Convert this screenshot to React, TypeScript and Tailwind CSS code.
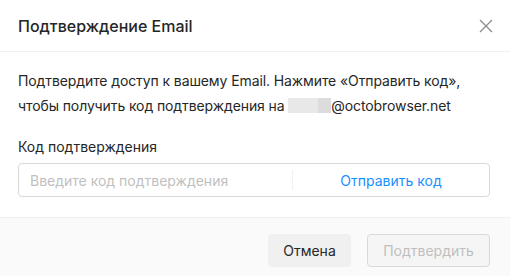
export default function App() {
  return (
    <div className="w-[510px] h-[276px] bg-white flex flex-col text-[#262626]" style={{ fontFamily: "Inter, 'Noto Sans', sans-serif" }}>
      <div className="h-[52px] shrink-0 flex items-center justify-between pl-[18px] pr-[16px] border-b border-[#f0f0f0]">
        <h1 className="text-[16px] font-medium">Подтверждение Email</h1>
        <button className="w-[16px] h-[16px] flex items-center justify-center text-[#8c8c8c]">
          <svg width="14" height="14" viewBox="0 0 14 14" fill="none" stroke="currentColor" strokeWidth="1.3">
            <path d="M1 1 L13 13 M13 1 L1 13" />
          </svg>
        </button>
      </div>

      <div className="flex-1 pl-[18px] pr-[20px] pt-[16px]">
        <p className="text-[14px] leading-[25px] tracking-[-0.1px]">
          Подтвердите доступ к вашему Email. Нажмите «Отправить код»,
          <br />
          чтобы получить код подтверждения на{" "}
          <span className="inline-flex align-middle h-[15px] mb-[3px]">
            <span className="w-[30px] bg-[#e8e8e8]" />
            <span className="w-[13px] bg-[#dcdcdc]" />
          </span>
          @octobrowser.net
        </p>

        <div className="mt-[19px] text-[14px] leading-[20px]">Код подтверждения</div>
        <div className="mt-[6px] h-[34px] w-full flex items-center border border-[#d9d9d9] rounded-[4px]">
          <input
            className="flex-1 min-w-0 h-full px-[11px] text-[14px] outline-none bg-transparent placeholder:text-[#bfbfbf]"
            placeholder="Введите код подтверждения"
          />
          <div className="w-px h-[20px] bg-[#f0f0f0]" />
          <button className="w-[196px] h-full text-[14px] text-[#1890ff]">Отправить код</button>
        </div>
      </div>

      <div className="h-[59px] shrink-0 bg-[#fafafa] border-t border-[#f0f0f0] flex items-start justify-end gap-[16px] pt-[16px] pr-[20px]">
        <button className="h-[33px] w-[83px] rounded-[4px] bg-[#f0f0f0] text-[14px] text-[#262626]">Отмена</button>
        <button className="h-[33px] w-[123px] rounded-[4px] bg-[#f5f5f5] border border-[#d9d9d9] text-[14px] text-[#bfbfbf]" disabled>
          Подтвердить
        </button>
      </div>
    </div>
  );
}
